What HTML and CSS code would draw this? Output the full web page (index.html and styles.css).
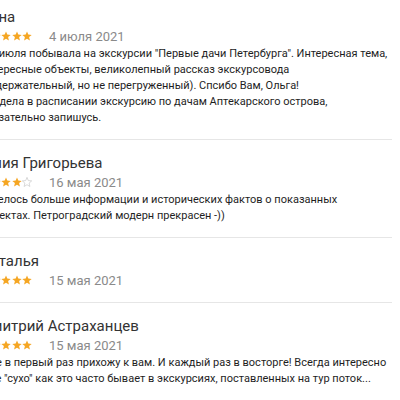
FILE: index.html
```
<!DOCTYPE html>
<html>

<head>
    <title>Отзывы</title>
    <link rel="stylesheet" href="styles.css">
</head>
<body>
    <svg width="0" height="0" class="defs">
        <defs>
            <polygon id="star" points="5,0.4 6.3,3.6 9.7,3.9 7.1,6.1 7.9,9.5 5,7.7 2.1,9.5 2.9,6.1 0.3,3.9 3.7,3.6"/>
        </defs>
    </svg>

    <div class="reviews">
        <div class="review">
            <div class="review-name">Анна</div>
            <div class="review-meta">
                <span class="stars">
                    <svg viewBox="0 0 10 10"><use href="#star"/></svg>
                    <svg viewBox="0 0 10 10"><use href="#star"/></svg>
                    <svg viewBox="0 0 10 10"><use href="#star"/></svg>
                    <svg viewBox="0 0 10 10"><use href="#star"/></svg>
                    <svg viewBox="0 0 10 10"><use href="#star"/></svg>
                </span>
                <span class="review-date">4 июля 2021</span>
            </div>
            <p class="review-text">Я 4 июля побывала на экскурсии "Первые дачи Петербурга". Интересная тема,<br>интересные объекты, великолепный рассказ экскурсовода<br>(содержательный, но не перегруженный). Спсибо Вам, Ольга!<br>Увидела в расписании экскурсию по дачам Аптекарского острова,<br>обязательно запишусь.</p>
        </div>
        <div class="review">
            <div class="review-name">Юлия Григорьева</div>
            <div class="review-meta">
                <span class="stars">
                    <svg viewBox="0 0 10 10"><use href="#star"/></svg>
                    <svg viewBox="0 0 10 10"><use href="#star"/></svg>
                    <svg viewBox="0 0 10 10"><use href="#star"/></svg>
                    <svg viewBox="0 0 10 10"><use href="#star"/></svg>
                    <svg viewBox="0 0 10 10" class="star-empty"><use href="#star"/></svg>
                </span>
                <span class="review-date">16 мая 2021</span>
            </div>
            <p class="review-text">Хотелось больше информации и исторических фактов о показанных<br>объектах. Петроградский модерн прекрасен -))</p>
        </div>
        <div class="review">
            <div class="review-name">Наталья</div>
            <div class="review-meta">
                <span class="stars">
                    <svg viewBox="0 0 10 10"><use href="#star"/></svg>
                    <svg viewBox="0 0 10 10"><use href="#star"/></svg>
                    <svg viewBox="0 0 10 10"><use href="#star"/></svg>
                    <svg viewBox="0 0 10 10"><use href="#star"/></svg>
                    <svg viewBox="0 0 10 10"><use href="#star"/></svg>
                </span>
                <span class="review-date">15 мая 2021</span>
            </div>
        </div>
        <div class="review">
            <div class="review-name">Дмитрий Астраханцев</div>
            <div class="review-meta">
                <span class="stars">
                    <svg viewBox="0 0 10 10"><use href="#star"/></svg>
                    <svg viewBox="0 0 10 10"><use href="#star"/></svg>
                    <svg viewBox="0 0 10 10"><use href="#star"/></svg>
                    <svg viewBox="0 0 10 10"><use href="#star"/></svg>
                    <svg viewBox="0 0 10 10"><use href="#star"/></svg>
                </span>
                <span class="review-date">15 мая 2021</span>
            </div>
            <p class="review-text">Я не в первый раз прихожу к вам. И каждый раз в восторге! Всегда интересно<br>и не "сухо" как это часто бывает в экскурсиях, поставленных на тур поток...</p>
        </div>
    </div>
</body>
</html>
```

FILE: styles.css
```
body
{
    margin: 0;
    background-color: white;
    font-family: Roboto, sans-serif;
    color: #222;
    overflow: hidden;
}

.defs
{
    position: absolute;
}

.reviews
{
    margin-top: -6px;
    margin-left: -20px;
    width: 412px;
}

.review
{
    padding: 13px 0;
    border-bottom: 1px solid #e6e6e6;
}

.review-name
{
    font-size: 15px;
    line-height: 20px;
    color: #333;
}

.review-meta
{
    display: flex;
    align-items: center;
    height: 18px;
    gap: 17px;
}

.stars
{
    display: flex;
    gap: 0.5px;
}

.stars svg
{
    width: 10px;
    height: 10px;
    fill: #f5a623;
}

.stars .star-empty
{
    fill: none;
    stroke: #c8c8c8;
    stroke-width: 0.7;
}

.review-date
{
    font-size: 13px;
    color: #8a8a8a;
}

.review-text
{
    margin: 1px 0 0 0;
    font-size: 11px;
    line-height: 16px;
    color: #1e1e1e;
    white-space: nowrap;
}
```
